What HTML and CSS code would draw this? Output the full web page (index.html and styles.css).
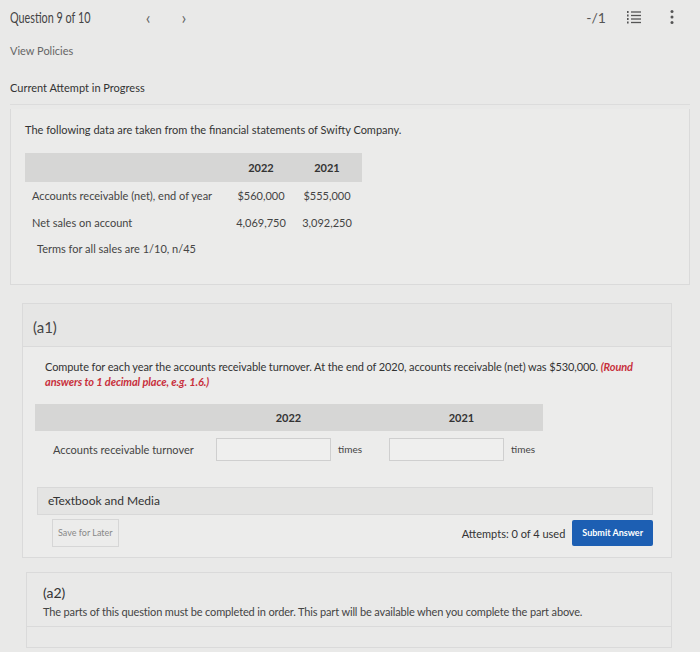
FILE: index.html
```html
<!DOCTYPE html>
<html>
<head>
    <meta charset="utf-8">
    <title>Question 9 of 10</title>
    <link rel="stylesheet" href="styles.css">
</head>
<body>
    <div class="topbar">
        <div class="qnav">
            <span class="qtitle">Question 9 of 10</span>
            <span class="chev prev">&lsaquo;</span>
            <span class="chev">&rsaquo;</span>
        </div>
        <div class="tools">
            <span class="score">-/1</span>
            <svg class="ico-list" width="16" height="14" viewBox="0 0 16 14">
                <g stroke="#555" stroke-width="1.3">
                    <line x1="5" y1="2" x2="15" y2="2"/>
                    <line x1="5" y1="5.5" x2="15" y2="5.5"/>
                    <line x1="5" y1="9" x2="15" y2="9"/>
                    <line x1="5" y1="12.5" x2="15" y2="12.5"/>
                </g>
                <g fill="#555">
                    <rect x="1" y="1" width="1.6" height="2"/>
                    <rect x="1" y="4.5" width="1.6" height="2"/>
                    <rect x="1" y="8" width="1.6" height="2"/>
                    <rect x="1" y="11.5" width="1.6" height="2"/>
                </g>
            </svg>
            <svg class="ico-more" width="6" height="16" viewBox="0 0 6 16">
                <circle cx="3" cy="2.5" r="1.5" fill="#555"/>
                <circle cx="3" cy="8" r="1.5" fill="#555"/>
                <circle cx="3" cy="13.5" r="1.5" fill="#555"/>
            </svg>
        </div>
    </div>

    <div class="policies">View Policies</div>
    <div class="attempt">Current Attempt in Progress</div>

    <div class="panel intro">
        <p class="lead">The following data are taken from the financial statements of Swifty Company.</p>
        <table class="data">
            <tr class="head">
                <th class="lbl"></th>
                <th>2022</th>
                <th>2021</th>
            </tr>
            <tr>
                <td class="lbl">Accounts receivable (net), end of year</td>
                <td>$560,000</td>
                <td>$555,000</td>
            </tr>
            <tr>
                <td class="lbl">Net sales on account</td>
                <td>4,069,750</td>
                <td>3,092,250</td>
            </tr>
        </table>
        <p class="terms">Terms for all sales are 1/10, n/45</p>
    </div>

    <div class="panel part">
        <div class="part-head">(a1)</div>
        <div class="part-body">
            <p class="task">Compute for each year the accounts receivable turnover. At the end of 2020, accounts receivable (net) was $530,000. <em class="hint">(Round answers to 1 decimal place, e.g. 1.6.)</em></p>
            <div class="answer">
                <div class="ans-head">
                    <span class="ans-lbl"></span>
                    <span class="ans-year">2022</span>
                    <span class="ans-year">2021</span>
                </div>
                <div class="ans-row">
                    <span class="ans-lbl">Accounts receivable turnover</span>
                    <span class="ans-cell"><span class="field"></span><span class="unit">times</span></span>
                    <span class="ans-cell"><span class="field"></span><span class="unit">times</span></span>
                </div>
            </div>
            <div class="etext">eTextbook and Media</div>
            <div class="actions">
                <span class="save">Save for Later</span>
                <span class="used">Attempts: 0 of 4 used</span>
                <span class="submit">Submit Answer</span>
            </div>
        </div>
    </div>

    <div class="panel next">
        <div class="next-title">(a2)</div>
        <p class="next-text">The parts of this question must be completed in order. This part will be available when you complete the part above.</p>
        <div class="next-foot"></div>
    </div>
</body>
</html>
```

FILE: styles.css
```css
html,
body {
    margin: 0;
    padding: 0;
    overflow: hidden;
}

body {
    background: #e9e9e8;
    color: #333;
    font-family: Lato, "Open Sans", Arial, sans-serif;
    font-size: 11px;
    height: 652px;
    padding: 0 10px;
}

p {
    margin: 0;
}

.topbar {
    display: flex;
    justify-content: space-between;
    align-items: center;
    height: 34px;
}

.qnav {
    display: flex;
    align-items: center;
}

/* the title in the shot is narrow, so squeeze it */
.qtitle {
    display: inline-block;
    font-size: 15px;
    color: #444;
    transform: scaleX(0.72);
    transform-origin: left center;
    margin-right: -30px;
}

.chev {
    font-size: 17px;
    color: #666;
    margin-left: 31px;
    line-height: 1;
}

.chev.prev {
    margin-left: 54px;
}

.tools {
    display: flex;
    align-items: center;
    gap: 17px;
    padding-right: 15px;
}

.score {
    font-size: 14px;
    color: #555;
    margin-right: 3px;
}

.ico-more {
    margin-left: 10px;
}

.policies {
    margin-top: 10px;
    color: #666;
    font-size: 11px;
}

.attempt {
    margin-top: 24px;
    padding-bottom: 10px;
    font-size: 11px;
    color: #333;
    border-bottom: 1px solid #dcdcdc;
}

.panel {
    background: #ebebea;
    border: 1px solid #dadada;
}

.intro {
    margin-top: 4px;
    height: 176px;
    padding: 14px 14px 0;
    box-sizing: border-box;
    border-top: none;
}

.lead {
    font-size: 11px;
    color: #333;
}

.data {
    margin-top: 17px;
    border-collapse: collapse;
    font-size: 11px;
}

.data th {
    background: #d6d6d5;
    height: 27px;
    font-weight: bold;
    color: #333;
    text-align: center;
}

.data td {
    height: 27px;
    text-align: center;
    color: #444;
    padding: 0 6px;
}

.data .lbl {
    width: 192px;
    text-align: left;
    padding-left: 7px;
}

.data th:nth-child(2) {
    width: 60px;
}

.data th:nth-child(3) {
    width: 68px;
}

.terms {
    margin-top: 6px;
    padding-left: 12px;
    color: #444;
}

.part {
    margin: 18px 18px 0 12px;
    background: #ececeb;
}

.part-head {
    height: 42px;
    line-height: 46px;
    padding-left: 10px;
    font-size: 15px;
    color: #444;
    background: #e6e6e5;
    border-bottom: 1px solid #dadada;
}

.part-body {
    padding: 12px 18px 10px 22px;
}

.task {
    font-size: 11px;
    line-height: 15px;
    color: #333;
    letter-spacing: -0.1px;
}

.hint {
    color: #c8303c;
    font-weight: bold;
}

.answer {
    margin: 15px 0 0 -10px;
    width: 508px;
}

.ans-head {
    display: flex;
    height: 27px;
    align-items: center;
    background: #d6d6d5;
    font-weight: bold;
}

.ans-row {
    display: flex;
    align-items: center;
    height: 36px;
}

.ans-lbl {
    flex: none;
    width: 163px;
    padding-left: 18px;
    color: #444;
}

.ans-head .ans-year {
    flex: none;
    width: 145px;
    padding-right: 28px;
    text-align: center;
    color: #333;
}

.ans-cell {
    flex: none;
    display: flex;
    align-items: center;
    width: 173px;
}

.field {
    width: 113px;
    height: 21px;
    background: #efefee;
    border: 1px solid #cfcfcf;
}

.unit {
    margin-left: 7px;
    color: #444;
    font-size: 10px;
}

.etext {
    margin: 20px 0 0 -8px;
    height: 26px;
    line-height: 26px;
    padding-left: 10px;
    font-size: 12px;
    background: #e4e4e3;
    border: 1px solid #d8d8d8;
    color: #333;
}

.actions {
    display: flex;
    align-items: center;
    margin-top: 4px;
    padding-left: 7px;
}

.save {
    height: 26px;
    line-height: 26px;
    padding: 0 5px;
    border: 1px solid #d6d6d6;
    font-size: 9px;
    color: #888;
}

.used {
    margin-left: auto;
    font-size: 11px;
    color: #333;
}

.submit {
    margin-left: 7px;
    background: #1d5fb3;
    color: #fff;
    font-size: 9px;
    font-weight: bold;
    height: 26px;
    line-height: 26px;
    padding: 0 10px;
    border-radius: 2px;
}

.next {
    margin: 14px 18px 0 16px;
    padding: 11px 0 0 16px;
    height: 76px;
    box-sizing: border-box;
    background: #e9e9e8;
}

.next-title {
    font-size: 14px;
    color: #333;
}

.next-text {
    margin-top: 4px;
    font-size: 11px;
    color: #444;
    letter-spacing: -0.15px;
}

.next-foot {
    margin: 8px 0 0 -16px;
    border-top: 1px solid #dadada;
}
```
